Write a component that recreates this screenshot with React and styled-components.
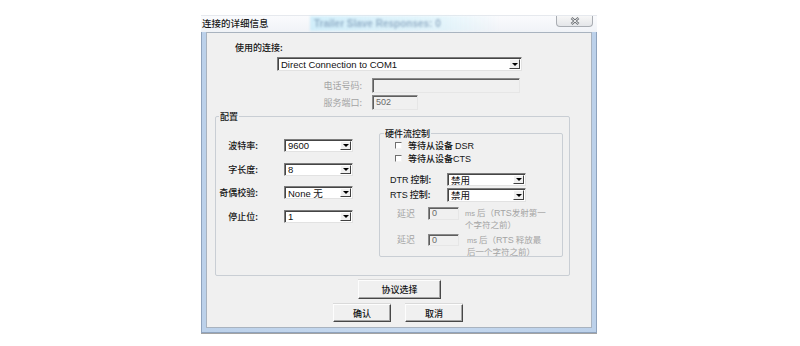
import React from "react";
import styled, { createGlobalStyle } from "styled-components";

const Global = createGlobalStyle`
  html, body { margin: 0; padding: 0; background: #fff; }
  body {
    width: 800px; height: 346px; overflow: hidden;
    font-family: "Noto Sans CJK SC", "Liberation Sans", sans-serif;
    color: #111;
  }
  * { box-sizing: border-box; }
`;

const LATIN = `"Liberation Sans Narrow", "Liberation Sans", "Noto Sans CJK SC", sans-serif`;

const Page = styled.div`
  padding: 15px 0 0 201px;
`;

const Window = styled.div`
  width: 396px;
  display: flex;
  flex-direction: column;
`;

const TitleBar = styled.div`
  height: 17px;
  display: flex;
  align-items: flex-start;
  background: linear-gradient(#fafbfd, #f0f3f7);
  border-top: 1px solid #e6e9ee;
`;

const Title = styled.div`
  width: 109px;
  padding-left: 1px;
  font-size: 9.5px;
  font-weight: 500;
  line-height: 15px;
  color: #1a1a1a;
  white-space: nowrap;
`;

const Ghost = styled.div`
  width: 190px;
  height: 15px;
  background: linear-gradient(90deg, rgba(185, 232, 250, 0.6), rgba(200, 240, 252, 0.4) 70%, rgba(255, 255, 255, 0));
  font-family: ${LATIN};
  font-size: 10px;
  font-weight: 700;
  line-height: 15px;
  padding-left: 4px;
  color: rgba(120, 150, 180, 0.7);
  filter: blur(0.9px);
  white-space: nowrap;
`;

const CloseBtn = styled.div`
  margin-left: auto;
  margin-right: 4px;
  width: 37px;
  height: 11px;
  border: 1px solid #a9adb3;
  border-top: none;
  border-radius: 0 0 4px 4px;
  background: linear-gradient(#f7f7f7, #e4e6e9);
  display: flex;
  align-items: flex-start;
  justify-content: center;
  padding-top: 1px;
`;

const Frame = styled.div`
  background: linear-gradient(90deg, #bcd1ea, #c6d9ef 50%, #bcd1ea);
  border: 1px solid #8fa3bd;
  border-top: none;
  padding: 0 4px 4px 4px;
  box-shadow: 0 1px 0 #a3a3a3;
`;

const Panel = styled.div`
  height: 296px;
  background: #f0f0f0;
  border: 1px solid #a9b3bf;
  display: flex;
  flex-direction: column;
  align-items: flex-start;
`;

const Text = styled.div`
  font-size: ${(p) => p.$fs || 9}px;
  font-weight: ${(p) => (p.$disabled ? 400 : 500)};
  line-height: ${(p) => p.$lh || 11}px;
  color: ${(p) => (p.$disabled ? "#a4a4a4" : "#151515")};
  white-space: nowrap;
  text-align: ${(p) => p.$align || "left"};
`;

const ConnLabel = styled(Text)`
  margin: 9px 0 0 28px;
`;

const Combo = styled.div`
  width: ${(p) => p.$w}px;
  height: ${(p) => p.$h || 13}px;
  margin: ${(p) => p.$m || "0"};
  background: #fff;
  border-top: 1px solid #7c7c7c;
  border-left: 1px solid #7c7c7c;
  border-right: 1px solid #e2e2e2;
  border-bottom: 1px solid #e2e2e2;
  box-shadow: inset 1px 1px 0 #454545;
  display: flex;
  align-items: stretch;
`;

const ComboText = styled.span`
  flex: 1;
  padding-left: 3px;
  font-family: ${LATIN};
  font-size: 9.5px;
  display: flex;
  align-items: center;
  color: #111;
  white-space: nowrap;
  overflow: hidden;
`;

const Arrow = styled.span`
  width: 11px;
  margin: 1px 1px 1px 0;
  background: #f0f0f0;
  border-top: 1px solid #fff;
  border-left: 1px solid #fff;
  border-right: 1px solid #404040;
  border-bottom: 1px solid #404040;
  display: flex;
  align-items: center;
  justify-content: center;
  &::after {
    content: "";
    border-left: 3px solid transparent;
    border-right: 3px solid transparent;
    border-top: 3px solid #000;
  }
`;

const Field = styled.div`
  width: ${(p) => p.$w}px;
  height: ${(p) => p.$h || 15}px;
  background: #f0f0f0;
  border-top: 1px solid #8a8a8a;
  border-left: 1px solid #8a8a8a;
  border-right: 1px solid #e6e6e6;
  border-bottom: 1px solid #e6e6e6;
  box-shadow: inset 1px 1px 0 #5e5e5e;
  font-family: ${LATIN};
  font-size: 9px;
  color: #6a6a6a;
  padding: 1px 0 0 3px;
  line-height: ${(p) => (p.$h || 15) - 4}px;
`;

const FormRow = styled.div`
  display: grid;
  grid-template-columns: 155px auto;
  column-gap: 10px;
  align-items: center;
  margin-top: ${(p) => p.$mt}px;
`;

const Group = styled.div`
  position: relative;
  border: 1px solid #c9ced4;
  border-radius: 2px;
  width: ${(p) => p.$w}px;
  height: ${(p) => p.$h}px;
  margin: ${(p) => p.$m};
  display: flex;
  flex-direction: ${(p) => p.$dir || "row"};
  align-items: flex-start;
`;

const GroupTitle = styled.span`
  position: absolute;
  top: -6px;
  left: ${(p) => p.$left}px;
  padding: 0 1px;
  background: #f0f0f0;
  font-size: 9px;
  font-weight: 500;
  line-height: 11px;
  color: #151515;
  white-space: nowrap;
`;

const LeftCol = styled.div`
  padding-top: 22px;
  display: grid;
  grid-template-columns: 42px 69px;
  column-gap: 26px;
  row-gap: 10.5px;
  grid-auto-rows: 13px;
  align-items: center;
`;

const CheckRow = styled.div`
  display: flex;
  align-items: center;
  gap: 6px;
  height: 11px;
  padding-left: 15px;
  margin-top: ${(p) => p.$mt}px;
`;

const Check = styled.span`
  width: 7px;
  height: 7px;
  background: #fff;
  border-top: 1px solid #6e6e6e;
  border-left: 1px solid #6e6e6e;
  border-right: 1px solid #f4f4f4;
  border-bottom: 1px solid #f4f4f4;
`;

const CtrlRow = styled.div`
  display: grid;
  grid-template-columns: 57px 79px;
  align-items: center;
  padding-left: 10px;
  margin-top: ${(p) => p.$mt}px;
`;

const DelayRow = styled.div`
  display: flex;
  align-items: flex-start;
  padding-left: 17px;
  margin-top: ${(p) => p.$mt}px;
`;

const DelayLabel = styled(Text)`
  width: 31px;
`;

const DelayNote = styled(Text)`
  margin-left: ${(p) => p.$ml}px;
  margin-top: ${(p) => p.$mt || 0}px;
`;

const Latin = styled.span`
  font-family: ${LATIN};
  font-size: ${(p) => p.$fs || 9}px;
`;

const Button = styled.div`
  width: ${(p) => p.$w}px;
  height: ${(p) => p.$h}px;
  background: #f0f0f0;
  border-top: 1px solid #fdfdfd;
  border-left: 1px solid #fdfdfd;
  border-right: 1px solid #474747;
  border-bottom: 1px solid #474747;
  box-shadow: inset -1px -1px 0 #a5a5a5, 0 -1px 0 #dadada;
  display: flex;
  align-items: center;
  justify-content: center;
  font-size: 9px;
  font-weight: 500;
  color: #111;
`;

const ProtoBtnWrap = styled.div`
  margin: 4px 0 0 151px;
`;

const BtnRow = styled.div`
  display: flex;
  gap: 14px;
  margin: 5px 0 0 126px;
`;

function ComboBox({ value, w, h, m }) {
  return (
    <Combo $w={w} $h={h} $m={m}>
      <ComboText>{value}</ComboText>
      <Arrow />
    </Combo>
  );
}

export default function App() {
  return (
    <>
      <Global />
      <Page>
        <Window>
          <TitleBar>
            <Title>连接的详细信息</Title>
            <Ghost>Trailer Slave Responses: 0</Ghost>
            <CloseBtn>
              <svg width="10" height="8" viewBox="0 0 10 8">
                <path d="M1.5 1 L8.5 7 M8.5 1 L1.5 7" stroke="#6f7378" strokeWidth="2.6" fill="none" />
                <path d="M1.5 1 L8.5 7 M8.5 1 L1.5 7" stroke="#f2f2f2" strokeWidth="1" fill="none" />
              </svg>
            </CloseBtn>
          </TitleBar>
          <Frame>
            <Panel>
              <ConnLabel>使用的连接:</ConnLabel>
              <ComboBox value="Direct Connection to COM1" w={245} h={14} m="4px 0 0 70px" />
              <FormRow $mt={7}>
                <Text $disabled $align="right">电话号码:</Text>
                <Field $w={148} $h={15} />
              </FormRow>
              <FormRow $mt={2}>
                <Text $disabled $align="right">服务端口:</Text>
                <Field $w={46} $h={15}>502</Field>
              </FormRow>

              <Group $w={355} $h={160} $m="6px 0 0 8px">
                <GroupTitle $left={3}>配置</GroupTitle>
                <LeftCol>
                  <Text $align="right" $lh={13}>波特率:</Text>
                  <ComboBox value="9600" w={69} />
                  <Text $align="right" $lh={13}>字长度:</Text>
                  <ComboBox value="8" w={69} />
                  <Text $align="right" $lh={13}>奇偶校验:</Text>
                  <ComboBox value="None 无" w={69} />
                  <Text $align="right" $lh={13}>停止位:</Text>
                  <ComboBox value="1" w={69} />
                </LeftCol>

                <Group $w={184} $h={124} $m="16px 0 0 26px" $dir="column">
                  <GroupTitle $left={4}>硬件流控制</GroupTitle>
                  <CheckRow $mt={6}>
                    <Check />
                    <Text>
                      等待从设备 <Latin>DSR</Latin>
                    </Text>
                  </CheckRow>
                  <CheckRow $mt={2}>
                    <Check />
                    <Text>
                      等待从设备<Latin>CTS</Latin>
                    </Text>
                  </CheckRow>
                  <CtrlRow $mt={9}>
                    <Text>
                      <Latin>DTR</Latin> 控制:
                    </Text>
                    <ComboBox value="禁用" w={79} />
                  </CtrlRow>
                  <CtrlRow $mt={2}>
                    <Text>
                      <Latin>RTS</Latin> 控制:
                    </Text>
                    <ComboBox value="禁用" w={79} h={14} />
                  </CtrlRow>
                  <DelayRow $mt={5}>
                    <DelayLabel $disabled $lh={13}>延迟</DelayLabel>
                    <Field $w={31} $h={13}>0</Field>
                    <DelayNote $disabled $fs={8.5} $lh={10} $ml={6} $mt={-0.5}>
                      <Latin $fs={7.5}>ms</Latin> 后（<Latin>RTS</Latin>发射第一
                      <br />
                      个字符之前）
                    </DelayNote>
                  </DelayRow>
                  <DelayRow $mt={5}>
                    <DelayLabel $disabled $lh={12}>延迟</DelayLabel>
                    <Field $w={31} $h={12}>0</Field>
                    <DelayNote $disabled $fs={8.5} $lh={11} $ml={8}>
                      <Latin $fs={7.5}>ms</Latin> 后（<Latin>RTS</Latin> 释放最
                      <br />
                      后一个字符之前）
                    </DelayNote>
                  </DelayRow>
                </Group>
              </Group>

              <ProtoBtnWrap>
                <Button $w={83} $h={19}>协议选择</Button>
              </ProtoBtnWrap>
              <BtnRow>
                <Button $w={58} $h={18}>确认</Button>
                <Button $w={58} $h={18}>取消</Button>
              </BtnRow>
            </Panel>
          </Frame>
        </Window>
      </Page>
    </>
  );
}
